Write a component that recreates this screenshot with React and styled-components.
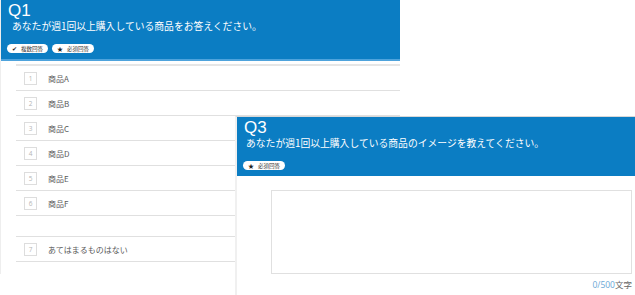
import React from 'react';
import styled, { createGlobalStyle } from 'styled-components';

const GlobalStyle = createGlobalStyle`
  html, body {
    margin: 0;
    padding: 0;
    background: #fff;
    overflow: hidden;
  }
  body {
    font-family: "Noto Sans", "Noto Sans CJK JP", sans-serif;
  }
`;

const BLUE = '#0b7dc3';

const Page = styled.div`
  position: relative;
  width: 635px;
  height: 295px;
  overflow: hidden;
`;

const Card = styled.section`
  width: 400px;
  background: #fff;
  border-left: 1px solid #eee;
  box-sizing: border-box;
`;

const FloatingCard = styled(Card)`
  position: absolute;
  left: 235px;
  top: 116px;
  width: 410px;
  height: 190px;
  border-left: 2px solid #f0f0f0;
  border-top: 1px solid #d8d8d8;
`;

const Header = styled.header`
  background: ${BLUE};
  color: #fff;
  padding: 1px 7px 0;
  height: ${(p) => p.$height}px;
  box-sizing: border-box;
  border-bottom: ${(p) => (p.$strip ? '2px solid #4ea3dc' : 'none')};
`;

const QNum = styled.div`
  font-family: "Liberation Sans", "Noto Sans", sans-serif;
  font-size: 17px;
  line-height: 19px;
  height: 19px;
`;

const QText = styled.div`
  font-family: "Noto Sans CJK JP", sans-serif;
  font-size: 9.8px;
  line-height: 12px;
  margin-left: ${(p) => p.$indent}px;
`;

const Badges = styled.div`
  display: flex;
  gap: 4px;
  margin-top: ${(p) => p.$gap}px;
  margin-left: -1px;
`;

const Badge = styled.span`
  display: inline-flex;
  align-items: center;
  gap: 4px;
  height: 9px;
  padding: 0 5px;
  border-radius: 5px;
  background: #fff;
  color: #333;
  font-family: "Noto Sans CJK JP", sans-serif;
  font-size: 5.5px;
  white-space: nowrap;
`;

const Mark = styled.span`
  font-size: 6px;
  color: #222;
`;

const List = styled.div`
  padding: 3px 0 12px 15px;
`;

const Row = styled.div`
  display: flex;
  align-items: center;
  height: 24px;
  border-top: ${(p) => (p.$first ? '2px solid #e6e6e6' : '1px solid #e0e0e0')};
  border-bottom: ${(p) => (p.$last ? '1px solid #e0e0e0' : 'none')};
  margin-top: ${(p) => (p.$spaced ? '20px' : '0')};
`;

const NumBox = styled.span`
  width: 11px;
  height: 11px;
  margin-left: 8px;
  border: 1px solid #ddd;
  color: #b5b5b5;
  font-family: "Open Sans", sans-serif;
  font-size: 6.5px;
  display: flex;
  align-items: center;
  justify-content: center;
`;

const Label = styled.span`
  margin-left: 11px;
  color: #5a5a5a;
  font-family: "Noto Sans CJK JP", sans-serif;
  font-size: 8px;
`;

const Body = styled.div`
  padding: 14px 0 0 34px;
`;

const TextArea = styled.div`
  width: 361px;
  height: 84px;
  border: 1px solid #e0e0e0;
  box-sizing: border-box;
`;

const Counter = styled.div`
  width: 361px;
  text-align: right;
  margin-top: 4px;
  font-family: "Noto Sans CJK JP", sans-serif;
  font-size: 8.5px;
  color: #666;
`;

const Count = styled.span`
  color: #6aa8d6;
  font-family: "Open Sans", sans-serif;
`;

const items = ['商品A', '商品B', '商品C', '商品D', '商品E', '商品F'];

export default function App() {
  return (
    <Page>
      <GlobalStyle />
      <Card>
        <Header $height={61} $strip>
          <QNum>Q1</QNum>
          <QText $indent={4}>あなたが週1回以上購入している商品をお答えください。</QText>
          <Badges $gap={12}>
            <Badge><Mark>✔</Mark>複数回答</Badge>
            <Badge><Mark>★</Mark>必須回答</Badge>
          </Badges>
        </Header>
        <List>
          {items.map((item, i) => (
            <Row key={item} $first={i === 0} $last={i === items.length - 1}>
              <NumBox>{i + 1}</NumBox>
              <Label>{item}</Label>
            </Row>
          ))}
          <Row $spaced $last>
            <NumBox>7</NumBox>
            <Label>あてはまるものはない</Label>
          </Row>
        </List>
      </Card>

      <FloatingCard>
        <Header $height={59}>
          <QNum>Q3</QNum>
          <QText $indent={2}>あなたが週1回以上購入している商品のイメージを教えてください。</QText>
          <Badges $gap={12}>
            <Badge><Mark>★</Mark>必須回答</Badge>
          </Badges>
        </Header>
        <Body>
          <TextArea />
          <Counter><Count>0/500</Count>文字</Counter>
        </Body>
      </FloatingCard>
    </Page>
  );
}
